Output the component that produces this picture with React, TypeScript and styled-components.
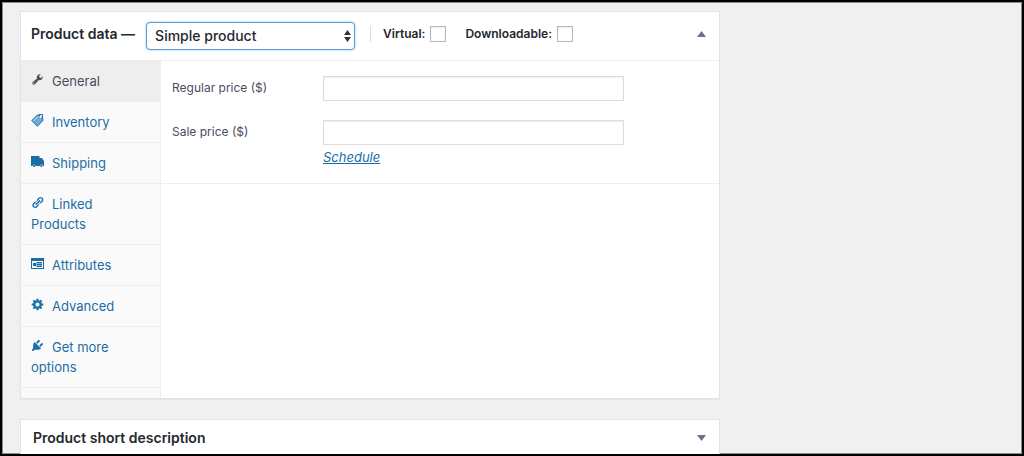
import React, { useState } from "react";
import styled, { createGlobalStyle } from "styled-components";

const GlobalStyle = createGlobalStyle`
  *, *::before, *::after { box-sizing: border-box; }
  body {
    margin: 0;
    background: #f0f0f0;
    color: #23282d;
    font: 13px/20px Inter, "Liberation Sans", sans-serif;
  }
`;

const Screen = styled.div`
  height: 100vh;
  overflow: hidden;
  border: 2px solid #000;
  box-shadow: inset 0 0 0 1px #8f8a8c;
`;

const Columns = styled.div`
  display: grid;
  grid-template-columns: minmax(0, 1fr) 280px;
  gap: 22px;
  padding: 9px 0 0 18px;
`;

const Main = styled.main`
  display: flex;
  flex-direction: column;
  gap: 20px;
`;

const Postbox = styled.section`
  background: #fff;
  border: 1px solid #e2e2e2;
  box-shadow: 0 1px 1px rgba(0, 0, 0, 0.04);
`;

const Header = styled.header<{ $compact?: boolean }>`
  display: flex;
  align-items: flex-start;
  padding: ${(p) => (p.$compact ? "6px 13px 6px 12px" : "10px 13px 10px 10px")};
  border-bottom: 1px solid #eee;
`;

const Title = styled.h2`
  margin: 0;
  font-size: 14px;
  font-weight: 600;
  line-height: 24px;
  white-space: nowrap;
`;

const Toggle = styled.button`
  display: flex;
  align-items: center;
  height: 24px;
  margin-left: auto;
  padding: 0;
  border: 0;
  background: none;
  color: #72708a;
  cursor: pointer;
`;

const SelectBox = styled.span`
  display: grid;
  align-items: center;
  width: 209px;
  margin: 0 15px 0 11px;

  > * { grid-area: 1 / 1; }
  > svg {
    justify-self: end;
    margin-right: 4px;
    pointer-events: none;
  }
`;

const Select = styled.select`
  appearance: none;
  width: 100%;
  height: 28px;
  padding: 0 20px 0 8px;
  border: 1px solid #5b9dd9;
  border-radius: 4px;
  outline: 0;
  box-shadow: 0 0 2px rgba(30, 140, 190, 0.6);
  background: #fff;
  color: #23282d;
  font: 500 14px/20px Inter, "Liberation Sans", sans-serif;
`;

const Flags = styled.div`
  display: flex;
  align-items: center;
  gap: 19px;
  height: 16px;
  margin-top: 4px;
  padding-left: 12px;
  border-left: 1px solid #ddd;
`;

const Flag = styled.label`
  display: flex;
  align-items: center;
  gap: 5px;
  font-size: 12px;
  font-weight: 600;
`;

const Check = styled.input`
  appearance: none;
  width: 16px;
  height: 16px;
  margin: 0;
  border: 1px solid #b4b9be;
  background: #fff;
  box-shadow: inset 0 1px 2px rgba(0, 0, 0, 0.08);

  &:checked { background: #1e73aa; }
`;

const Body = styled.div`
  display: flex;
`;

const Tabs = styled.ul`
  flex: 0 0 140px;
  margin: 0;
  padding: 0 0 10px;
  list-style: none;
  background: #fafafa;
  border-right: 1px solid #eee;
`;

const Tab = styled.a<{ $active?: boolean }>`
  display: block;
  padding: 10px;
  border-bottom: 1px solid #eee;
  background: ${(p) => (p.$active ? "#eee" : "transparent")};
  color: ${(p) => (p.$active ? "#4c4c5e" : "#1a6ea5")};
  text-decoration: none;

  > svg {
    width: 13px;
    height: 13px;
    margin-right: 8px;
    vertical-align: 0;
  }
`;

const Panel = styled.div`
  flex: 1;
  min-width: 0;
`;

const Fields = styled.div`
  display: flex;
  flex-direction: column;
  gap: 19px;
  padding: 15px 11px;
  border-bottom: 1px solid #eee;
`;

const Field = styled.div`
  display: grid;
  grid-template-columns: 151px minmax(0, 301px);
`;

const FieldLabel = styled.label`
  color: #4c4c5e;
  font-size: 12px;
  line-height: 24px;
`;

const TextInput = styled.input`
  width: 100%;
  height: 25px;
  padding: 3px 5px;
  border: 1px solid #ddd;
  background: #fff;
  box-shadow: inset 0 1px 2px rgba(0, 0, 0, 0.07);
  font: inherit;
`;

const Schedule = styled.a`
  grid-column: 2;
  justify-self: start;
  margin-top: 2px;
  color: #1a6ea5;
  font-style: italic;
  line-height: 21px;
`;

const GeneralIcon = () => (
  <svg viewBox="0 0 20 20" fill="currentColor" aria-hidden="true">
    <path d="M16.68 9.77c-1.34 1.34-3.3 1.67-4.95.99l-5.41 6.52c-.99.99-2.59.99-3.58 0s-.99-2.59 0-3.57l6.52-5.42c-.68-1.65-.35-3.61.99-4.95 1.28-1.28 3.12-1.62 4.72-1.06l-2.89 2.89 2.82 2.82 2.86-2.87c.53 1.58.18 3.39-1.08 4.65zM3.81 16.21c.4.39 1.04.39 1.43 0 .4-.4.4-1.04 0-1.43-.39-.4-1.03-.4-1.43 0-.39.39-.39 1.03 0 1.43z" />
  </svg>
);

const InventoryIcon = () => (
  <svg viewBox="0 0 13 13" aria-hidden="true">
    <path d="M7.500 .6h4v4" fill="none" stroke="currentColor" />
    <path d="M.8 6.600 6.300 1.100l2.700.5 3.300 4.400-5.900 6.300z" fill="#6fabd2" stroke="currentColor" strokeLinejoin="round" />
    <path d="M2.600 6.900 7.100 2.500" fill="none" stroke="#c5deed" />
    <circle cx="9.600" cy="2.900" r="1" fill="#fff" />
  </svg>
);

const ShippingIcon = () => (
  <svg viewBox="0 0 13 13" fill="currentColor" aria-hidden="true">
    <path d="M0 1h8.500v2H11l2 3v5h-1.200a1.500 1.500 0 0 0-3 0H4.600a1.500 1.500 0 0 0-3 0H0z" />
    <circle cx="3.1" cy="11" r="1.1" />
    <circle cx="10.3" cy="11" r="1.1" />
  </svg>
);

const LinkIcon = () => (
  <svg viewBox="0 0 20 20" fill="currentColor" aria-hidden="true">
    <path d="M17.74 2.76c1.68 1.69 1.68 4.41 0 6.1l-1.53 1.52c-1.12 1.12-2.7 1.47-4.14 1.09l2.62-2.61.76-.77.76-.76c.84-.84.84-2.2 0-3.04-.84-.85-2.2-.85-3.04 0l-.77.76-3.38 3.38c-.37-1.44-.02-3.02 1.1-4.14l1.52-1.53c1.69-1.68 4.42-1.68 6.1 0zM8.59 13.43l5.34-5.34c.42-.42.42-1.1 0-1.52-.44-.43-1.13-.39-1.53 0l-5.33 5.34c-.42.42-.42 1.1 0 1.52.44.43 1.13.39 1.52 0zm-.76 2.29l4.14-4.15c.38 1.44.03 3.02-1.09 4.14l-1.52 1.53c-1.69 1.68-4.41 1.68-6.1 0-1.68-1.68-1.68-4.42 0-6.1l1.53-1.52c1.12-1.12 2.7-1.47 4.14-1.1l-4.14 4.15c-.85.84-.85 2.2 0 3.05.84.84 2.2.84 3.04 0z" />
  </svg>
);

const AttributesIcon = () => (
  <svg viewBox="0 0 13 13" fill="currentColor" aria-hidden="true">
    <path fillRule="evenodd" d="M0 1h13v11H0zM1 4v7h11V4z" />
    <path d="M2 6h3v3H2zM6 5h5v1H6zM6 7h5v1H6zM6 9h5v1H6z" />
    <path d="M5 5h6v5H5z" opacity=".5" />
  </svg>
);

const AdvancedIcon = () => (
  <svg viewBox="0 1 19 19" fill="currentColor" aria-hidden="true">
    <path d="M18 12h-2.18c-.17.7-.44 1.35-.81 1.93l1.54 1.54-2.1 2.1-1.54-1.54c-.58.36-1.23.63-1.91.79V19H8v-2.18c-.68-.16-1.33-.43-1.91-.79l-1.54 1.54-2.12-2.12 1.54-1.54c-.36-.58-.63-1.23-.79-1.91H1V9.03h2.17c.16-.7.44-1.35.8-1.94L2.43 5.55l2.1-2.1 1.54 1.54c.58-.37 1.24-.64 1.93-.81V2h3v2.18c.68.16 1.33.43 1.91.79l1.54-1.54 2.12 2.12-1.54 1.54c.36.59.64 1.24.8 1.94H18V12zm-8.5 1.5c1.66 0 3-1.34 3-3s-1.34-3-3-3-3 1.34-3 3 1.34 3 3 3z" />
  </svg>
);

const PluginIcon = () => (
  <svg viewBox="1 1 18 18" fill="currentColor" aria-hidden="true">
    <path d="M13.11 4.36L9.87 7.6 8 5.73l3.24-3.24c.35-.34 1.05-.2 1.56.32.52.51.66 1.21.31 1.55zm-8 1.77l.91-1.12 9.01 9.01-1.19.84c-.71.71-2.63 1.16-3.82 1.16H6.14L4.9 17.26c-.59.59-1.54.59-2.12 0-.59-.58-.59-1.53 0-2.12l1.24-1.24v-3.88c0-1.13.4-3.19 1.09-3.89zm7.26 3.97l3.24-3.24c.34-.35 1.04-.21 1.55.31.52.51.66 1.21.31 1.55l-3.24 3.25z" />
  </svg>
);

const Triangle = ({ up }: { up?: boolean }) => (
  <svg width="9" height="6" viewBox="0 0 9 6" fill="currentColor" aria-hidden="true">
    <path d={up ? "M4.5 0 9 6H0z" : "M0 0h9L4.5 6z"} />
  </svg>
);

const tabs = [
  { label: "General", Icon: GeneralIcon },
  { label: "Inventory", Icon: InventoryIcon },
  { label: "Shipping", Icon: ShippingIcon },
  { label: "Linked Products", Icon: LinkIcon },
  { label: "Attributes", Icon: AttributesIcon },
  { label: "Advanced", Icon: AdvancedIcon },
  { label: "Get more options", Icon: PluginIcon },
];

export default function App() {
  const [active, setActive] = useState("General");

  return (
    <>
      <GlobalStyle />
      <Screen>
        <Columns>
          <Main>
            <Postbox>
              <Header>
                <Title>Product data —</Title>
                <SelectBox>
                  <Select aria-label="Product type">
                    <option>Simple product</option>
                  </Select>
                  <svg width="7" height="12" viewBox="0 0 7 12" fill="#32323c" aria-hidden="true">
                    <path d="M3.5 0 7 5H0zM0 7h7l-3.5 5z" />
                  </svg>
                </SelectBox>
                <Flags>
                  <Flag>
                    Virtual:
                    <Check type="checkbox" />
                  </Flag>
                  <Flag>
                    Downloadable:
                    <Check type="checkbox" />
                  </Flag>
                </Flags>
                <Toggle type="button" aria-label="Collapse product data">
                  <Triangle up />
                </Toggle>
              </Header>
              <Body>
                <Tabs>
                  {tabs.map(({ label, Icon }) => (
                    <li key={label}>
                      <Tab href="#" $active={label === active} onClick={() => setActive(label)}>
                        <Icon />
                        {label}
                      </Tab>
                    </li>
                  ))}
                </Tabs>
                <Panel>
                  <Fields>
                    <Field>
                      <FieldLabel htmlFor="regular-price">Regular price ($)</FieldLabel>
                      <TextInput id="regular-price" type="text" />
                    </Field>
                    <Field>
                      <FieldLabel htmlFor="sale-price">Sale price ($)</FieldLabel>
                      <TextInput id="sale-price" type="text" />
                      <Schedule href="#">Schedule</Schedule>
                    </Field>
                  </Fields>
                </Panel>
              </Body>
            </Postbox>
            <Postbox>
              <Header $compact>
                <Title>Product short description</Title>
                <Toggle type="button" aria-label="Expand product short description">
                  <Triangle />
                </Toggle>
              </Header>
            </Postbox>
          </Main>
        </Columns>
      </Screen>
    </>
  );
}
